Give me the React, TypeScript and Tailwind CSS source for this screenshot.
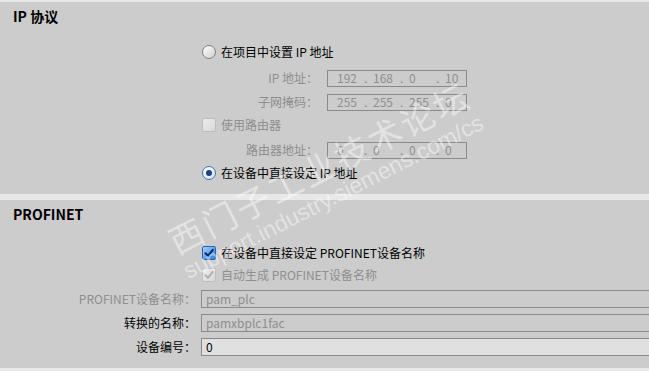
import React from "react";

const FONT = "font-['Noto_Sans_CJK_SC','Noto_Sans',sans-serif]";

function Radio({ checked }: { checked?: boolean }) {
  if (checked) {
    return (
      <span className="flex h-[14px] w-[14px] items-center justify-center rounded-full border border-[#3a73c0] bg-gradient-to-br from-[#ffffff] to-[#d6e4f5]">
        <span className="h-[6px] w-[6px] rounded-full bg-[#1b3f8c]" />
      </span>
    );
  }
  return (
    <span className="h-[14px] w-[14px] rounded-full border border-[#7f7f7f] bg-gradient-to-br from-[#ffffff] to-[#cfcfcf]" />
  );
}

function Check({ checked, disabled }: { checked?: boolean; disabled?: boolean }) {
  if (checked && !disabled) {
    return (
      <span className="flex h-[14px] w-[14px] items-center justify-center rounded-[2px] border border-[#2a64b5] bg-gradient-to-br from-[#9fd0fb] to-[#2f7fdc]">
        <svg width="12" height="12" viewBox="0 0 12 12">
          <path d="M2.5 6.2 L5 8.8 L9.8 2.8" fill="none" stroke="#0c2763" strokeWidth="2" strokeLinecap="round" strokeLinejoin="round" />
        </svg>
      </span>
    );
  }
  return (
    <span className="flex h-[14px] w-[14px] items-center justify-center rounded-[2px] border border-[#bdbdbd] bg-gradient-to-br from-[#ececec] to-[#d9d9d9]">
      {checked && (
        <svg width="12" height="12" viewBox="0 0 12 12">
          <path d="M2.5 6.2 L5 8.8 L9.8 2.8" fill="none" stroke="#b0b0b0" strokeWidth="2" strokeLinecap="round" strokeLinejoin="round" />
        </svg>
      )}
    </span>
  );
}

function IpBox({ parts }: { parts: string[] }) {
  return (
    <div className="ml-[9px] flex h-[17px] w-[140px] items-center border border-[#8a8a8a] pl-[9px] text-[12px] leading-none text-[#8e8e8e]">
      {parts.map((p, i) => (
        <div key={i} className="flex w-[36px] shrink-0">
          <span className="w-[27px]">{p}</span>
          {i < parts.length - 1 && <span>.</span>}
        </div>
      ))}
    </div>
  );
}

function IpRow({ label, parts, h }: { label: string; parts: string[]; h: string }) {
  return (
    <div className={`flex items-center ${h}`}>
      <div className="w-[318px] text-right text-[12px] text-[#8e8e8e]">{label}</div>
      <IpBox parts={parts} />
    </div>
  );
}

function NameRow({ label, value, dim, active }: { label: string; value: string; dim?: boolean; active?: boolean }) {
  return (
    <div className="flex h-[24px] items-center">
      <div className={`w-[196px] shrink-0 text-right text-[12px] ${dim ? "text-[#8e8e8e]" : "text-black"}`}>{label}</div>
      <div
        className={`ml-[5px] flex h-[18px] w-[470px] shrink-0 items-center border border-[#8a8a8a] pl-[4px] text-[12px] leading-none ${
          active ? "bg-[#e0e0e0] text-black" : "text-[#8e8e8e]"
        }`}
      >
        {value}
      </div>
    </div>
  );
}

export default function App() {
  return (
    <div className={`relative h-[371px] w-[649px] overflow-hidden bg-[#e8e8e8] ${FONT}`}>
      <div className="mt-[2px] flex h-[192px] flex-col bg-[#cccccc]">
        <div className="flex h-[28px] items-center pl-[13px] text-[14px] font-bold text-black">IP 协议</div>
        <div className="mt-[10px] flex h-[24px] items-center gap-[5px] pl-[202px] text-[12px] text-black">
          <Radio />
          <span>在项目中设置 IP 地址</span>
        </div>
        <IpRow label="IP 地址：" parts={["192", "168", "0", "10"]} h="mt-[2px] h-[24px]" />
        <IpRow label="子网掩码：" parts={["255", "255", "255", "0"]} h="h-[24px]" />
        <div className="flex h-[22px] items-center gap-[5px] pl-[202px] text-[12px] text-[#8e8e8e]">
          <Check disabled />
          <span>使用路由器</span>
        </div>
        <IpRow label="路由器地址：" parts={["0", "0", "0", "0"]} h="mt-[2px] h-[24px]" />
        <div className="flex h-[22px] items-center gap-[5px] pl-[202px] text-[12px] text-black">
          <Radio checked />
          <span>在设备中直接设定 IP 地址</span>
        </div>
      </div>

      <div className="mt-[6px] flex h-[168px] flex-col bg-[#cccccc]">
        <div className="flex h-[28px] items-center pl-[13px] text-[14px] font-bold text-black">PROFINET</div>
        <div className="mt-[13px] flex h-[24px] items-center gap-[5px] pl-[202px] text-[12px] text-black">
          <Check checked />
          <span>在设备中直接设定 PROFINET设备名称</span>
        </div>
        <div className="flex h-[20px] items-center gap-[5px] pl-[202px] text-[12px] text-[#8e8e8e]">
          <Check checked disabled />
          <span>自动生成 PROFINET设备名称</span>
        </div>
        <div className="mt-[2px]">
          <NameRow label="PROFINET设备名称：" value="pam_plc" dim />
          <NameRow label="转换的名称：" value="pamxbplc1fac" />
          <NameRow label="设备编号：" value="0" active />
        </div>
      </div>

      <div className="pointer-events-none absolute left-[171px] top-[223px] origin-left -rotate-[27deg] whitespace-nowrap text-[34px] leading-[40px] tracking-[3px] text-white/45">
        西门子工业技术论坛
      </div>
      <div className="pointer-events-none absolute left-[185px] top-[261px] origin-left -rotate-[27deg] whitespace-nowrap font-['Liberation_Sans',sans-serif] text-[23px] leading-[23px] text-white/45">
        support.industry.siemens.com/cs
      </div>
    </div>
  );
}
